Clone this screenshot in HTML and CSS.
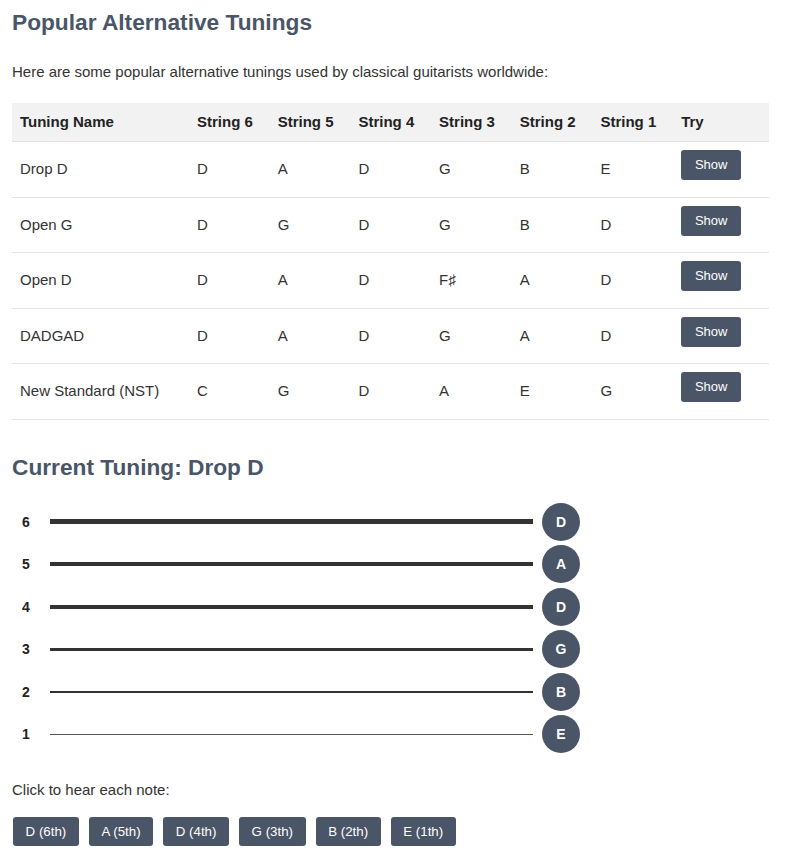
FILE: index.html
```html
<!DOCTYPE html>
<html>
<head>
<meta charset="utf-8">
<link rel="stylesheet" href="styles.css">
</head>
<body>
<div class="page">
  <h1 class="title">Popular Alternative Tunings</h1>
  <p class="intro">Here are some popular alternative tunings used by classical guitarists worldwide:</p>
  <table class="tunings">
    <colgroup>
      <col class="c-name"><col class="c-str"><col class="c-str"><col class="c-str"><col class="c-str"><col class="c-str"><col class="c-str"><col class="c-try">
    </colgroup>
    <thead>
      <tr><th>Tuning Name</th><th>String 6</th><th>String 5</th><th>String 4</th><th>String 3</th><th>String 2</th><th>String 1</th><th>Try</th></tr>
    </thead>
    <tbody>
      <tr><td>Drop D</td><td>D</td><td>A</td><td>D</td><td>G</td><td>B</td><td>E</td><td><button class="btn show">Show</button></td></tr>
      <tr><td>Open G</td><td>D</td><td>G</td><td>D</td><td>G</td><td>B</td><td>D</td><td><button class="btn show">Show</button></td></tr>
      <tr><td>Open D</td><td>D</td><td>A</td><td>D</td><td>F♯</td><td>A</td><td>D</td><td><button class="btn show">Show</button></td></tr>
      <tr><td>DADGAD</td><td>D</td><td>A</td><td>D</td><td>G</td><td>A</td><td>D</td><td><button class="btn show">Show</button></td></tr>
      <tr><td>New Standard (NST)</td><td>C</td><td>G</td><td>D</td><td>A</td><td>E</td><td>G</td><td><button class="btn show">Show</button></td></tr>
    </tbody>
  </table>

  <h2 class="subtitle">Current Tuning: Drop D</h2>
  <div class="strings">
    <div class="string-row"><span class="num">6</span><span class="line w6"></span><span class="note">D</span></div>
    <div class="string-row"><span class="num">5</span><span class="line w5"></span><span class="note">A</span></div>
    <div class="string-row"><span class="num">4</span><span class="line w4"></span><span class="note">D</span></div>
    <div class="string-row"><span class="num">3</span><span class="line w3"></span><span class="note">G</span></div>
    <div class="string-row"><span class="num">2</span><span class="line w2"></span><span class="note">B</span></div>
    <div class="string-row"><span class="num">1</span><span class="line w1"></span><span class="note">E</span></div>
  </div>

  <p class="hear">Click to hear each note:</p>
  <div class="note-buttons">
    <button class="btn nb">D (6th)</button>
    <button class="btn nb">A (5th)</button>
    <button class="btn nb">D (4th)</button>
    <button class="btn nb">G (3th)</button>
    <button class="btn nb">B (2th)</button>
    <button class="btn nb">E (1th)</button>
  </div>
</div>
</body>
</html>
```
FILE: styles.css
```css
* { box-sizing: border-box; }
html, body { margin: 0; padding: 0; background: #fff; }
body {
  font-family: "Liberation Sans", Arial, sans-serif;
  color: #333;
  font-size: 15px;
}
.page {
  width: 757px;
  margin-left: 12px;
  padding-top: 8px;
}
.title {
  margin: 0;
  font-size: 22.7px;
  line-height: 28px;
  font-weight: bold;
  color: #4a5568;
}
.intro {
  margin: 25px 0 0;
  font-size: 15px;
  line-height: 22px;
}
.tunings {
  margin-top: 20px;
  width: 757px;
  border-collapse: collapse;
  table-layout: fixed;
}
.c-name { width: 177px; }
.c-str { width: 80.7px; }
.c-try { width: 95.8px; }
.tunings th, .tunings td {
  text-align: left;
  padding: 8.25px 8px;
  line-height: 22px;
  border-bottom: 1px solid #e2e2e2;
  vertical-align: middle;
}
.tunings th {
  padding: 8px;
  background: #f2f2f2;
  font-weight: bold;
  color: #222;
}
.btn {
  font-family: "Liberation Sans", Arial, sans-serif;
  background: #4a5568;
  color: #fff;
  border: none;
  border-radius: 3px;
  cursor: pointer;
}
.show {
  display: block;
  width: 60px;
  height: 30px;
  padding: 0;
  font-size: 13px;
  line-height: 30px;
  margin-bottom: 8px;
}
.subtitle {
  margin: 33px 0 0;
  font-size: 22.7px;
  line-height: 28px;
  font-weight: bold;
  color: #4a5568;
}
.strings {
  margin-top: 22px;
  display: flex;
  flex-direction: column;
  gap: 4.6px;
}
.string-row {
  display: flex;
  align-items: center;
  height: 38px;
}
.num {
  width: 38px;
  padding-left: 10px;
  font-size: 14px;
  font-weight: bold;
  color: #222;
}
.line {
  width: 483px;
  background: #333;
}
.w6 { height: 5px; }
.w5 { height: 4px; }
.w4 { height: 4px; }
.w3 { height: 3px; }
.w2 { height: 2px; }
.w1 { height: 1px; background: #555; }
.note {
  margin-left: 9px;
  width: 38px;
  height: 38px;
  border-radius: 50%;
  background: #4a5568;
  color: #fff;
  font-weight: bold;
  font-size: 14px;
  display: flex;
  align-items: center;
  justify-content: center;
}
.hear {
  margin: 27px 0 0;
  font-size: 15px;
  line-height: 20px;
}
.note-buttons {
  margin-top: 17px;
  display: flex;
  gap: 10px;
  padding-left: 1px;
}
.nb {
  height: 29px;
  padding: 0 12.6px;
  font-size: 13.3px;
}
```
